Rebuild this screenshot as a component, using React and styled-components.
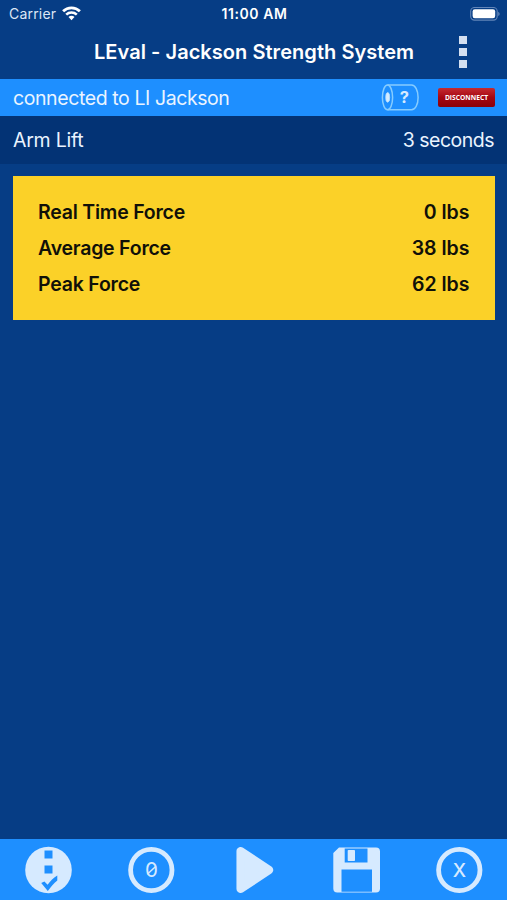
import React from 'react';
import styled, { createGlobalStyle } from 'styled-components';

const readings = [
  { label: 'Real Time Force', value: '0 lbs' },
  { label: 'Average Force', value: '38 lbs' },
  { label: 'Peak Force', value: '62 lbs' },
];

const WifiIcon = () => (
  <svg width="19" height="15" viewBox="0 0 19 15" fill="none" stroke="#fff">
    <path d="M1.1 5.3a12 12 0 0 1 16.8 0" strokeWidth="2.8" />
    <path d="M4.2 8.6a7.7 7.7 0 0 1 10.6 0" strokeWidth="2.6" />
    <path d="M6.5 11.1a4.2 4.2 0 0 1 6 0L9.5 14.2z" fill="#fff" stroke="none" />
  </svg>
);

const BatteryIcon = () => (
  <svg width="30" height="14" viewBox="0 0 30 14">
    <rect x="0.7" y="0.5" width="26.5" height="12.6" rx="3.8" fill="none" stroke="#6285b8" strokeWidth="1.1" />
    <rect x="2.6" y="2.3" width="22.6" height="9" rx="2.2" fill="#fff" />
    <path d="M28.2 4.7q1.5 .7 1.5 2.2t-1.5 2.2z" fill="#6285b8" />
  </svg>
);

const DeviceIcon = () => (
  <svg width="38" height="27" viewBox="0 0 38 27" fill="none" stroke="#86ccff" strokeWidth="1.5">
    <path d="M6.5 1h24c3.8 0 6.6 5.3 6.6 12.4s-2.800 12.400-6.600 12.400H6.5" />
    <ellipse cx="6.500" cy="13.400" rx="5.100" ry="12.400" />
    <ellipse cx="6.700" cy="13.400" rx="2" ry="4.800" fill="#d5ecff" stroke="#b5ddff" strokeWidth="0.800" />
    <IconText x="23.400" y="19" $size={16.5} $weight={700}>?</IconText>
  </svg>
);

const SelectIcon = () => (
  <svg width="48" height="48" viewBox="0 0 48 48">
    <circle cx="24.500" cy="24" r="23.300" fill="#d6eaff" />
    <path d="M20.500 4.500h8v8h-8zM20.500 19.500h8v8h-8z" fill="#1e8fff" />
    <path d="M17.200 37l3.200-1.500 3.200 3.300c2.500-3.600 5.500-6.600 9.700-9.300v5c-3.700 3-6.200 6.300-9.500 10.500z" fill="#1e8fff" />
  </svg>
);

const ZeroIcon = () => (
  <svg width="48" height="48" viewBox="0 0 48 48" fill="none" stroke="#d6eaff">
    <circle cx="24.300" cy="24" r="20.700" strokeWidth="4.800" />
    <IconText x="24.500" y="31.400" $size={20.5} $weight={400}>0</IconText>
    <path d="M20.300 28.300l8.600-8" strokeWidth="1.500" />
  </svg>
);

const PlayIcon = () => (
  <svg width="48" height="48" viewBox="0 0 48 48">
    <path
      d="M10.700 5.200v37.600L39 24z"
      fill="#d6eaff"
      stroke="#d6eaff"
      strokeWidth="8.500"
      strokeLinejoin="round"
    />
  </svg>
);

const SaveIcon = () => (
  <svg width="48" height="48" viewBox="0 0 48 48">
    <path
      fill="#d6eaff"
      fillRule="evenodd"
      d="M7 1.500h37a4 4 0 0 1 4 4v37a4 4 0 0 1-4 4H5.300a4 4 0 0 1-4-4V7zM12.700 2.500v14h22.800v-14zM9.500 23.500v22.300h30.500V23.500z"
    />
    <rect x="15.700" y="4" width="7.300" height="11" rx="0.800" fill="#d6eaff" />
  </svg>
);

const CloseIcon = () => (
  <svg width="48" height="48" viewBox="0 0 48 48" fill="none" stroke="#d6eaff">
    <circle cx="24.300" cy="24" r="20.700" strokeWidth="4.800" />
    <IconText x="24.300" y="30.900" $size={19} $weight={500}>X</IconText>
  </svg>
);

const actions = [
  { name: 'Select test', icon: <SelectIcon /> },
  { name: 'Zero', icon: <ZeroIcon /> },
  { name: 'Start', icon: <PlayIcon /> },
  { name: 'Save', icon: <SaveIcon /> },
  { name: 'Cancel', icon: <CloseIcon /> },
];

export default function App() {
  return (
    <>
      <GlobalStyle />
      <Screen>
        <StatusBar>
          <Carrier>
            <span>Carrier</span>
            <WifiIcon />
          </Carrier>
          <Clock>11:00 AM</Clock>
          <BatteryIcon />
        </StatusBar>
        <Header>
          <Title>LEval - Jackson Strength System</Title>
          <MenuButton aria-label="Menu">
            <MenuDot />
            <MenuDot />
            <MenuDot />
          </MenuButton>
        </Header>
        <ConnectionBar>
          <Label $spacing="-0.41px">connected to LI Jackson</Label>
          <DeviceIcon />
          <DisconnectButton>DISCONNECT</DisconnectButton>
        </ConnectionBar>
        <TestBar>
          <Label $spacing="-0.25px">Arm Lift</Label>
          <Label $spacing="-0.5px">3 seconds</Label>
        </TestBar>
        <Main>
          <ForceCard>
            {readings.map(({ label, value }) => (
              <Reading key={label}>
                <ReadingLabel>{label}</ReadingLabel>
                <span>{value}</span>
              </Reading>
            ))}
          </ForceCard>
        </Main>
        <Toolbar>
          {actions.map(({ name, icon }) => (
            <ToolButton key={name} aria-label={name}>
              {icon}
            </ToolButton>
          ))}
        </Toolbar>
      </Screen>
    </>
  );
}

const GlobalStyle = createGlobalStyle`
  * {
    box-sizing: border-box;
  }
  body {
    margin: 0;
    background-color: #063d85;
    font-family: Inter, 'Liberation Sans', sans-serif;
  }
  button {
    padding: 0;
    border: 0;
    background: none;
    font: inherit;
    cursor: pointer;
  }
  svg {
    display: block;
    flex-shrink: 0;
  }
`;

const Screen = styled.div`
  display: flex;
  flex-direction: column;
  height: 100vh;
  overflow: hidden;
  color: #fff;
  background-color: #063d85;
`;

const StatusBar = styled.div`
  display: grid;
  grid-template-columns: 1fr auto 1fr;
  align-items: center;
  height: 27px;
  padding: 0 7px 0 9px;
  font-size: 14px;
  & > svg {
    justify-self: end;
  }
`;

const Carrier = styled.div`
  display: flex;
  align-items: center;
  gap: 6px;
  color: #dce6f5;
  letter-spacing: 0.2px;
`;

const Clock = styled.span`
  font-weight: 600;
  letter-spacing: 0.6px;
`;

const Header = styled.header`
  display: grid;
  grid-template-columns: 94px 1fr 88px;
  align-items: center;
  height: 52px;
  padding-bottom: 2px;
`;

const Title = styled.h1`
  grid-column: 2;
  margin: 0;
  font-size: 20px;
  font-weight: 600;
  line-height: 24px;
  letter-spacing: 0.05px;
  white-space: nowrap;
`;

const MenuButton = styled.button`
  display: flex;
  flex-direction: column;
  justify-self: center;
  gap: 4px;
`;

const MenuDot = styled.span`
  width: 8px;
  height: 8px;
  background-color: #d3dff0;
`;

const ConnectionBar = styled.div`
  display: grid;
  grid-template-columns: 1fr 38px 57px;
  align-items: center;
  column-gap: 19px;
  height: 37px;
  padding: 0 12px 0 13px;
  background-color: #1e8fff;
`;

const Label = styled.span`
  font-size: 19.5px;
  line-height: 24px;
  letter-spacing: ${({ $spacing }) => $spacing};
  white-space: nowrap;
  color: #eaf4ff;
`;

const DisconnectButton = styled.button`
  height: 19px;
  border-radius: 2px;
  background: linear-gradient(#c52b30, #a50712 50%, #8b000a);
  color: #fff;
  font-family: 'Open Sans', sans-serif;
  font-size: 6.7px;
  font-weight: 700;
`;

const TestBar = styled.div`
  display: flex;
  align-items: center;
  justify-content: space-between;
  height: 48px;
  padding: 0 13px;
  background-color: #033375;
`;

const Main = styled.main`
  flex: 1;
  padding: 12px 12.5px 0 13px;
`;

const ForceCard = styled.section`
  padding: 18px 25px;
  background-color: #fbd128;
`;

const Reading = styled.div`
  display: flex;
  align-items: center;
  justify-content: space-between;
  height: 36px;
  color: #101008;
  font-size: 19.5px;
  font-weight: 600;
`;

const ReadingLabel = styled.span`
  letter-spacing: -0.22px;
`;

const Toolbar = styled.footer`
  display: flex;
  align-items: center;
  justify-content: space-between;
  height: 61px;
  padding: 0 24px;
  background-color: #1e8fff;
`;

const ToolButton = styled.button`
  width: 48px;
  height: 48px;
`;

const IconText = styled.text`
  fill: #d6eaff;
  stroke: none;
  text-anchor: middle;
  font-family: Inter, sans-serif;
  font-size: ${({ $size }) => $size}px;
  font-weight: ${({ $weight }) => $weight};
`;
